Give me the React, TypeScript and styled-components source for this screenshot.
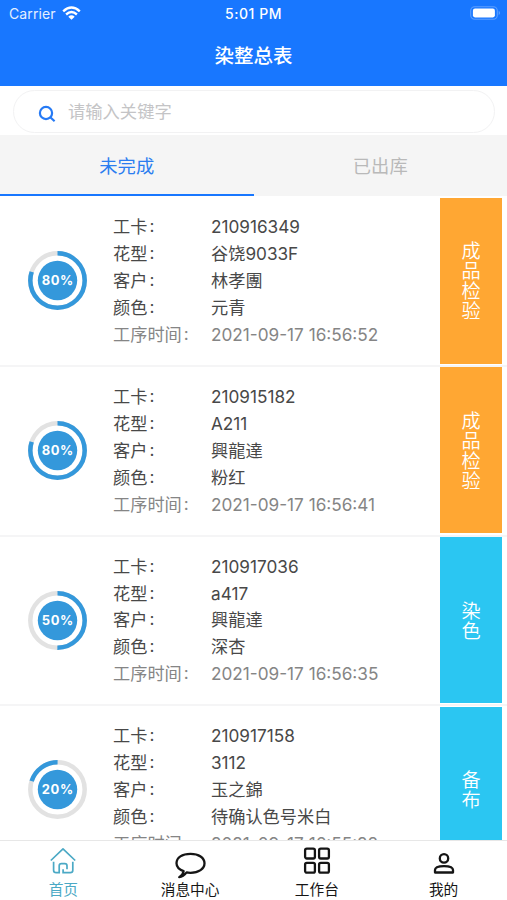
import React from "react";
import styled, { createGlobalStyle } from "styled-components";

const GlobalStyle = createGlobalStyle`
  * { box-sizing: border-box; }
  body { margin: 0; background: #fff; }
`;

const Screen = styled.div`
  width: 507px;
  height: 900px;
  display: flex;
  flex-direction: column;
  overflow: hidden;
  background: #fff;
  font-family: Inter, "Noto Sans CJK SC", sans-serif;
`;

const Header = styled.header`
  height: 86px;
  flex: none;
  background: #1877ff;
  color: #fff;
`;

const StatusBar = styled.div`
  height: 27px;
  display: grid;
  grid-template-columns: 1fr auto 1fr;
  align-items: center;
  padding: 0 6px 0 9px;
  font-size: 14px;
  line-height: 27px;
`;

const Carrier = styled.div`
  display: flex;
  align-items: center;
  gap: 6px;
  color: #e4efff;
  letter-spacing: 0.1px;
  svg { margin-top: -2px; }
`;

const Clock = styled.div`
  font-weight: 500;
  font-size: 14px;
  letter-spacing: 0.55px;
  margin-left: -3px;
`;

const BatterySlot = styled.div`
  display: flex;
  justify-content: flex-end;
  svg { margin-top: -1px; }
`;

const Title = styled.h1`
  margin: 0;
  height: 59px;
  line-height: 59px;
  text-align: center;
  font-size: 19.5px;
  font-weight: 500;
`;

const SearchArea = styled.div`
  height: 49px;
  flex: none;
  padding: 4px 12px 2px 13px;
`;

const SearchBox = styled.div`
  height: 43px;
  border: 1px solid #f2f2f3;
  border-radius: 22px;
  display: flex;
  align-items: center;
  padding-left: 24px;
  gap: 12px;
  color: #c4c4c6;
  font-size: 17.3px;
  svg { margin-top: 4px; }
`;

const Placeholder = styled.span`
  line-height: 40px;
`;

const Tabs = styled.nav`
  height: 61px;
  flex: none;
  display: flex;
  background: #f5f5f5;
`;

const Tab = styled.div<{ $active?: boolean }>`
  flex: 1;
  text-align: center;
  line-height: 62px;
  height: 61px;
  font-size: 18.3px;
  color: ${(p) => (p.$active ? "#2b7df0" : "#b9b9b9")};
  border-bottom: ${(p) => (p.$active ? "2px solid #1877ff" : "none")};
`;

const List = styled.main`
  flex: 1;
  min-height: 0;
  overflow: hidden;
  padding-top: 1px;
`;

const Row = styled.article`
  height: 169.75px;
  display: flex;
  border-bottom: 2px solid #f5f5f6;
`;

const ProgressCell = styled.div`
  width: 113px;
  flex: none;
  padding: 54.2px 0 0 28px;
`;

const Details = styled.dl`
  flex: 1;
  margin: 0;
  padding-top: 16.2px;
`;

const Field = styled.div<{ $muted?: boolean }>`
  display: grid;
  grid-template-columns: 98px 1fr;
  height: 26.9px;
  line-height: 27px;
  font-size: 17.2px;
  color: ${(p) => (p.$muted ? "#858585" : "#484848")};
  white-space: nowrap;
`;

const Label = styled.dt`
  display: flex;
`;

const Colon = styled.span`
  margin: -1px 0 0 2px;
  font-family: Inter, sans-serif;
`;

const Value = styled.dd`
  margin: 0;
`;

const Stage = styled.div<{ $tone: string }>`
  width: 62px;
  height: 166px;
  margin: 0.7px 5px 0 0;
  flex: none;
  display: flex;
  align-items: center;
  justify-content: center;
  background: ${(p) => p.$tone};
  color: #fff;
`;

const StageText = styled.span`
  width: 20px;
  padding-top: 1px;
  font-size: 19.2px;
  line-height: 20px;
  font-weight: 350;
  overflow-wrap: anywhere;
  text-align: center;
`;

const TabBar = styled.footer`
  height: 60px;
  flex: none;
  display: grid;
  grid-template-columns: repeat(4, 1fr);
  border-top: 1px solid #e7e7e7;
  background: #fff;
`;

const NavItem = styled.div<{ $active?: boolean }>`
  display: flex;
  flex-direction: column;
  align-items: center;
  color: ${(p) => (p.$active ? "#4ba9c5" : "#151515")};
  font-size: 14.7px;
`;

const NavIcon = styled.div`
  height: 39px;
  display: flex;
  svg { display: block; }
`;

const NavLabel = styled.span`
  line-height: 20px;
`;

const WifiIcon = () => (
  <svg width="19" height="14" viewBox="0 0 19 14" fill="none" stroke="#fff" strokeWidth="2.4">
    <path d="M1.2 5.3Q9.5 -2.3 17.8 5.3" />
    <path d="M4.1 8.5Q9.5 3.7 14.9 8.5" />
    <path d="M6.3 10.7Q9.5 8 12.7 10.7L9.5 13.8Z" fill="#fff" stroke="none" />
  </svg>
);

const BatteryIcon = () => (
  <svg width="31" height="14" viewBox="0 0 31 14">
    <rect x=".7" y=".7" width="26.6" height="12.6" rx="4" fill="none" stroke="#5c9fff" strokeWidth="1.1" />
    <rect x="2.9" y="2.6" width="22" height="8.8" rx="2.1" fill="#fff" />
    <path d="M28.7 4.8Q31.5 7 28.7 9.2Z" fill="#5c9fff" />
  </svg>
);

const SearchIcon = () => (
  <svg width="18" height="18" viewBox="0 0 18 18" fill="none" stroke="#267af5" strokeWidth="2.2">
    <circle cx="8" cy="8" r="6.1" />
    <path d="M12.3 12.3L16.6 16.2" />
  </svg>
);

const HomeIcon = () => (
  <svg width="26" height="39" viewBox="0 0 26 39" fill="none" stroke="currentColor" strokeWidth="1.7">
    <path d="M.8 19.5L13 7.9L25.2 19.5" strokeLinejoin="round" />
    <path d="M3.6 20.8V29.2Q3.6 31.6 6.1 31.6H9.2V24.8Q9.2 22.6 11.4 22.6H14.8Q17 22.6 17 24.8V28.2" />
    <path d="M13.1 28.2V31.6H20.2Q22.8 31.6 22.8 29.2V20.8" />
  </svg>
);

const MessageIcon = () => (
  <svg width="31" height="39" viewBox="0 0 31 39" fill="none" stroke="currentColor" strokeWidth="2.3" strokeLinejoin="round">
    <path d="M8.6 30.2C3.8 28.4 1.5 26 1.5 22.3C1.5 16.5 7.2 12.8 15.5 12.8S29.5 16.8 29.5 22.3S23.7 31.8 15.5 31.8C14.1 31.8 12.8 31.8 11.6 31.4C9.2 34.6 6.8 36 4.2 36.2C6.8 34.8 8.2 32.7 8.6 30.2Z" />
  </svg>
);

const GridIcon = () => (
  <svg width="28" height="39" viewBox="0 0 28 39" fill="none" stroke="currentColor" strokeWidth="2.3">
    <rect x="2.1" y="7.7" width="9.8" height="9.8" rx="1.7" />
    <rect x="16.1" y="7.7" width="9.8" height="9.8" rx="1.7" />
    <rect x="2.1" y="21.8" width="9.8" height="9.8" rx="1.7" />
    <rect x="16.1" y="21.8" width="9.8" height="9.8" rx="1.7" />
  </svg>
);

const PersonIcon = () => (
  <svg width="22" height="39" viewBox="0 0 22 39" fill="none" stroke="currentColor" strokeWidth="2.3">
    <circle cx="11" cy="17.4" r="4.2" />
    <path d="M2 31.5V29C2 23.7 20 23.7 20 29V31.5Z" strokeLinejoin="round" />
  </svg>
);

const PercentText = styled.text`
  font: 700 13px Inter, sans-serif;
  letter-spacing: 0.6px;
  fill: #fff;
  text-anchor: middle;
`;

const Ring = ({ percent }: { percent: number }) => {
  const radius = 27.2;
  const length = 2 * Math.PI * radius;
  const reversed = percent < 50;
  return (
    <svg width="60" height="60" viewBox="0 0 60 60">
      <circle cx="29.5" cy="29.5" r={radius} fill="none" stroke="#e2e2e2" strokeWidth="4.5" />
      <circle
        cx="29.5"
        cy="29.5"
        r={radius}
        fill="none"
        stroke="#3498db"
        strokeWidth="4.5"
        strokeDasharray={`${(length * percent) / 100} ${length}`}
        transform={reversed ? `rotate(${-90 - percent * 3.6} 29.5 29.5)` : "rotate(-90 29.5 29.5)"}
      />
      <circle cx="29.5" cy="29.5" r="19.7" fill="#3498db" />
      <PercentText x="29.8" y="34.2">{percent}%</PercentText>
    </svg>
  );
};

type Order = {
  card: string;
  pattern: string;
  customer: string;
  color: string;
  time: string;
  percent: number;
  stage: string;
  tone: string;
};

const ORANGE = "#ffa733";
const CYAN = "#2bc6f2";

const orders: Order[] = [
  { card: "210916349", pattern: "谷饶9033F", customer: "林孝團", color: "元青", time: "2021-09-17 16:56:52", percent: 80, stage: "成品检验", tone: ORANGE },
  { card: "210915182", pattern: "A211", customer: "興龍達", color: "粉红", time: "2021-09-17 16:56:41", percent: 80, stage: "成品检验", tone: ORANGE },
  { card: "210917036", pattern: "a417", customer: "興龍達", color: "深杏", time: "2021-09-17 16:56:35", percent: 50, stage: "染色", tone: CYAN },
  { card: "210917158", pattern: "3112", customer: "玉之錦", color: "待确认色号米白", time: "2021-09-17 16:55:28", percent: 20, stage: "备布", tone: CYAN },
];

const FieldLine = ({ label, value, muted }: { label: string; value: string; muted?: boolean }) => (
  <Field $muted={muted}>
    <Label>{label}<Colon>:</Colon></Label>
    <Value>{value}</Value>
  </Field>
);

export default function App() {
  return (
    <>
      <GlobalStyle />
      <Screen>
        <Header>
          <StatusBar>
            <Carrier>Carrier<WifiIcon /></Carrier>
            <Clock>5:01 PM</Clock>
            <BatterySlot><BatteryIcon /></BatterySlot>
          </StatusBar>
          <Title>染整总表</Title>
        </Header>
        <SearchArea>
          <SearchBox>
            <SearchIcon />
            <Placeholder>请输入关键字</Placeholder>
          </SearchBox>
        </SearchArea>
        <Tabs>
          <Tab $active>未完成</Tab>
          <Tab>已出库</Tab>
        </Tabs>
        <List>
          {orders.map((o) => (
            <Row key={o.card}>
              <ProgressCell><Ring percent={o.percent} /></ProgressCell>
              <Details>
                <FieldLine label="工卡" value={o.card} />
                <FieldLine label="花型" value={o.pattern} />
                <FieldLine label="客户" value={o.customer} />
                <FieldLine label="颜色" value={o.color} />
                <FieldLine label="工序时间" value={o.time} muted />
              </Details>
              <Stage $tone={o.tone}><StageText>{o.stage}</StageText></Stage>
            </Row>
          ))}
        </List>
        <TabBar>
          <NavItem $active><NavIcon><HomeIcon /></NavIcon><NavLabel>首页</NavLabel></NavItem>
          <NavItem><NavIcon><MessageIcon /></NavIcon><NavLabel>消息中心</NavLabel></NavItem>
          <NavItem><NavIcon><GridIcon /></NavIcon><NavLabel>工作台</NavLabel></NavItem>
          <NavItem><NavIcon><PersonIcon /></NavIcon><NavLabel>我的</NavLabel></NavItem>
        </TabBar>
      </Screen>
    </>
  );
}
